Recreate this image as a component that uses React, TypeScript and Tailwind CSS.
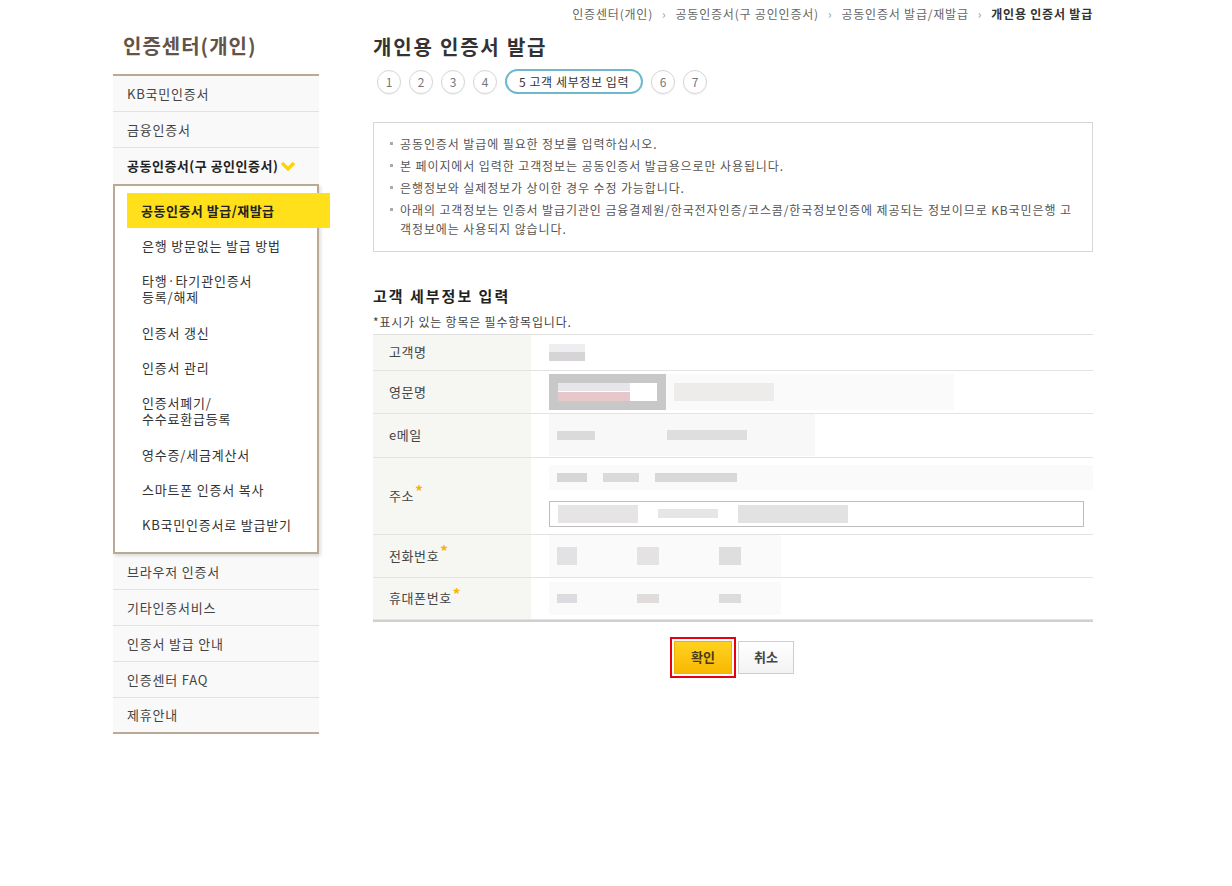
import { ReactNode } from "react";

const font = { fontFamily: '"Noto Sans CJK KR", "Noto Sans", sans-serif' };

const topMenu = ["KB국민인증서", "금융인증서"];
const subMenu: string[][] = [
  ["은행 방문없는 발급 방법"],
  ["타행·타기관인증서", "등록/해제"],
  ["인증서 갱신"],
  ["인증서 관리"],
  ["인증서폐기/", "수수료환급등록"],
  ["영수증/세금계산서"],
  ["스마트폰 인증서 복사"],
  ["KB국민인증서로 발급받기"],
];
const bottomMenu = ["브라우저 인증서", "기타인증서비스", "인증서 발급 안내", "인증센터 FAQ", "제휴안내"];

function Blur({ w, h, tone = "bg-[#ececec]" }: { w: string; h: string; tone?: string }) {
  return <div className={`${w} ${h} ${tone}`} />;
}

function Row({ label, req, h, children }: { label: string; req?: boolean; h: string; children?: ReactNode }) {
  return (
    <div className={`flex border-b border-[#e3e3e3] ${h}`}>
      <div className="flex w-[158px] items-center bg-[#f6f6f3] pl-4 text-[13px] tracking-[0.6px] text-[#444]">
        {label}
        {req && <span className="-mt-2 ml-px text-[15px] font-bold text-[#f6b400]">*</span>}
      </div>
      <div className="flex flex-1 items-center pl-[18px]">{children}</div>
    </div>
  );
}

function Sidebar() {
  return (
    <aside className="w-[206px] shrink-0">
      <h2 className="flex h-[47px] items-center pb-[9px] pl-[10px] text-[20px] font-bold tracking-[1px] text-[#63544a]">
        인증센터(개인)
      </h2>
      <ul className="border-t-2 border-[#bba994] text-[13px] tracking-[0.8px] text-[#444]">
        {topMenu.map((m) => (
          <li key={m} className="flex h-9 items-center border-b border-[#e2e2e2] bg-[#f9f9f9] pl-[14px]">
            {m}
          </li>
        ))}
        <li className="flex h-9 items-center bg-[#f9f9f9] pl-[14px] font-bold tracking-[0.5px] text-[#222]">
          공동인증서(구 공인인증서)
          <svg width="16" height="12" viewBox="0 0 16 12" className="ml-0.5">
            <path d="M2 3 L8 9 L14 3" fill="none" stroke="#ffd200" strokeWidth="3.2" />
          </svg>
        </li>
        <li className="relative border-2 border-[#bba994] bg-white pt-[7px] pb-[10px] shadow-[2px_2px_3px_rgba(0,0,0,0.12)]">
          <div className="mr-[-13px] ml-3 flex h-[35px] items-center bg-[#ffe01b] pl-[14px] font-bold tracking-[0.5px] text-[#222]">
            공동인증서 발급/재발급
          </div>
          {subMenu.map((lines) => (
            <div key={lines.join()} className="py-[10px] pl-[27px] leading-[15px] text-[#333]">
              {lines.map((l) => (
                <div key={l} className={lines.length > 1 ? "leading-4" : ""}>
                  {l}
                </div>
              ))}
            </div>
          ))}
        </li>
        {bottomMenu.map((m, i) => (
          <li
            key={m}
            className={`flex h-9 items-center bg-[#f9f9f9] pl-[14px] ${
              i === bottomMenu.length - 1 ? "border-b-2 border-[#bba994]" : "border-b border-[#e2e2e2]"
            }`}
          >
            {m}
          </li>
        ))}
      </ul>
    </aside>
  );
}

function Steps() {
  const circle =
    "flex h-6 w-6 items-center justify-center rounded-full border border-[#d5d5d5] text-[12px] text-[#777] shadow-[0_1px_1px_rgba(0,0,0,0.06)]";
  return (
    <div className="ml-1 flex items-center gap-2">
      {[1, 2, 3, 4].map((n) => (
        <div key={n} className={circle}>
          {n}
        </div>
      ))}
      <div className="flex h-[25px] w-[138px] items-center justify-center rounded-full border-2 border-[#6db8cc] text-[12px] tracking-[0.6px] text-[#333]">
        5 고객 세부정보 입력
      </div>
      <div className="flex gap-2">
        {[6, 7].map((n) => (
          <div key={n} className={circle}>
            {n}
          </div>
        ))}
      </div>
    </div>
  );
}

const notes = [
  "공동인증서 발급에 필요한 정보를 입력하십시오.",
  "본 페이지에서 입력한 고객정보는 공동인증서 발급용으로만 사용됩니다.",
  "은행정보와 실제정보가 상이한 경우 수정 가능합니다.",
  "아래의 고객정보는 인증서 발급기관인 금융결제원/한국전자인증/코스콤/한국정보인증에 제공되는 정보이므로 KB국민은행 고객정보에는 사용되지 않습니다.",
];

export default function App() {
  return (
    <div className="min-h-[886px] w-full bg-white text-[#333]" style={font}>
      <div className="ml-[113px] w-[980px]">
        <div className="flex h-[27px] items-center justify-end gap-[9px] text-[12px] tracking-[0.8px] text-[#666]">
          <span>인증센터(개인)</span>
          <span className="text-[#999]">›</span>
          <span>공동인증서(구 공인인증서)</span>
          <span className="text-[#999]">›</span>
          <span>공동인증서 발급/재발급</span>
          <span className="text-[#999]">›</span>
          <span className="font-bold text-[#333]">개인용 인증서 발급</span>
        </div>
        <div className="flex gap-[54px]">
          <Sidebar />
          <main className="flex-1">
            <h1 className="flex h-[42px] items-center pb-[2px] text-[20px] font-bold tracking-[1.8px] text-[#333]">
              개인용 인증서 발급
            </h1>
            <Steps />
            <div className="mt-[28px] border border-[#d6d6d6] px-4 pt-[11px] pb-[10px] text-[12px] tracking-[0.9px] text-[#555]">
              {notes.map((n) => (
                <div key={n} className="relative mb-[3px] pl-[10px] leading-[19px]">
                  <span className="absolute top-[8px] left-0 h-[3px] w-[3px] bg-[#aaa]" />
                  {n}
                </div>
              ))}
            </div>
            <h3 className="mt-[33px] text-[15px] font-bold tracking-[2px] text-[#222]">고객 세부정보 입력</h3>
            <p className="mt-[5px] text-[12px] tracking-[0.8px] text-[#444]">*표시가 있는 항목은 필수항목입니다.</p>
            <div className="mt-[3px] border-t border-[#e0e0e0] border-b-2 border-b-[#d0d0d0]">
              <Row label="고객명" h="h-9">
                <div className="flex flex-col">
                  <Blur w="w-[36px]" h="h-[8px]" tone="bg-[#eeeef0]" />
                  <Blur w="w-[36px]" h="h-[9px]" tone="bg-[#d6d4d6]" />
                </div>
              </Row>
              <Row label="영문명" h="h-[43px]">
                <div className="flex items-center gap-[8px] bg-[#fafafa] pr-[180px]">
                  <div className="flex h-[36px] w-[117px] flex-col justify-center gap-px border-[9px] border-[#c8c8c8] bg-white">
                    <div className="h-[8px] w-[72px] bg-[#e6e6ea]" />
                    <div className="h-[9px] w-[72px] bg-[#e6c8ca]" />
                  </div>
                  <div className="h-[18px] w-[100px] bg-[#eeebeb]" />
                </div>
              </Row>
              <Row label="e메일" h="h-[44px]">
                <div className="flex h-[42px] w-[266px] items-center gap-[72px] bg-[#f8f8f8] pl-2">
                  <Blur w="w-[38px]" h="h-[9px]" tone="bg-[#dadada]" />
                  <Blur w="w-[80px]" h="h-[10px]" tone="bg-[#dedede]" />
                </div>
              </Row>
              <Row label="주소" req h="h-[77px]">
                <div className="flex w-full flex-col gap-[11px]">
                  <div className="flex items-center gap-[16px] bg-[#fafafa] py-2 pl-2">
                    <Blur w="w-[30px]" h="h-[9px]" tone="bg-[#d6d6d6]" />
                    <Blur w="w-[36px]" h="h-[9px]" tone="bg-[#dadada]" />
                    <Blur w="w-[82px]" h="h-[9px]" tone="bg-[#d8d8d8]" />
                  </div>
                  <div className="mr-[9px] flex h-[26px] items-center gap-[20px] border border-[#bdbdbd] pl-2">
                    <Blur w="w-[80px]" h="h-[18px]" tone="bg-[#e6e4e4]" />
                    <Blur w="w-[60px]" h="h-[9px]" tone="bg-[#e6e6e6]" />
                    <Blur w="w-[110px]" h="h-[18px]" tone="bg-[#e2e2e2]" />
                  </div>
                </div>
              </Row>
              <Row label="전화번호" req h="h-[43px]">
                <div className="flex items-center gap-[60px] bg-[#fafafa] py-3 pl-2 pr-[40px]">
                  <Blur w="w-[20px]" h="h-[18px]" tone="bg-[#e2e2e4]" />
                  <Blur w="w-[22px]" h="h-[18px]" tone="bg-[#e4e2e2]" />
                  <Blur w="w-[22px]" h="h-[18px]" tone="bg-[#dedede]" />
                </div>
              </Row>
              <Row label="휴대폰번호" req h="h-[42px]">
                <div className="flex items-center gap-[60px] bg-[#fafafa] py-3 pl-2 pr-[40px]">
                  <Blur w="w-[20px]" h="h-[9px]" tone="bg-[#dcdce0]" />
                  <Blur w="w-[22px]" h="h-[9px]" tone="bg-[#e0dcdc]" />
                  <Blur w="w-[22px]" h="h-[9px]" tone="bg-[#dcdcdc]" />
                </div>
              </Row>
            </div>
            <div className="mt-[15px] flex items-center justify-center gap-[2px] pr-[2px]">
              <div className="border-2 border-[#e60012] p-[2px]">
                <button className="h-[33px] w-[58px] border border-[#e9b300] bg-gradient-to-b from-[#ffd21f] to-[#f8b800] text-[13px] font-bold text-[#4a3a18]">
                  확인
                </button>
              </div>
              <button className="h-[33px] w-[56px] border border-[#cfcfcf] bg-gradient-to-b from-white to-[#f3f3f3] text-[13px] font-bold text-[#444]">
                취소
              </button>
            </div>
          </main>
        </div>
      </div>
    </div>
  );
}
